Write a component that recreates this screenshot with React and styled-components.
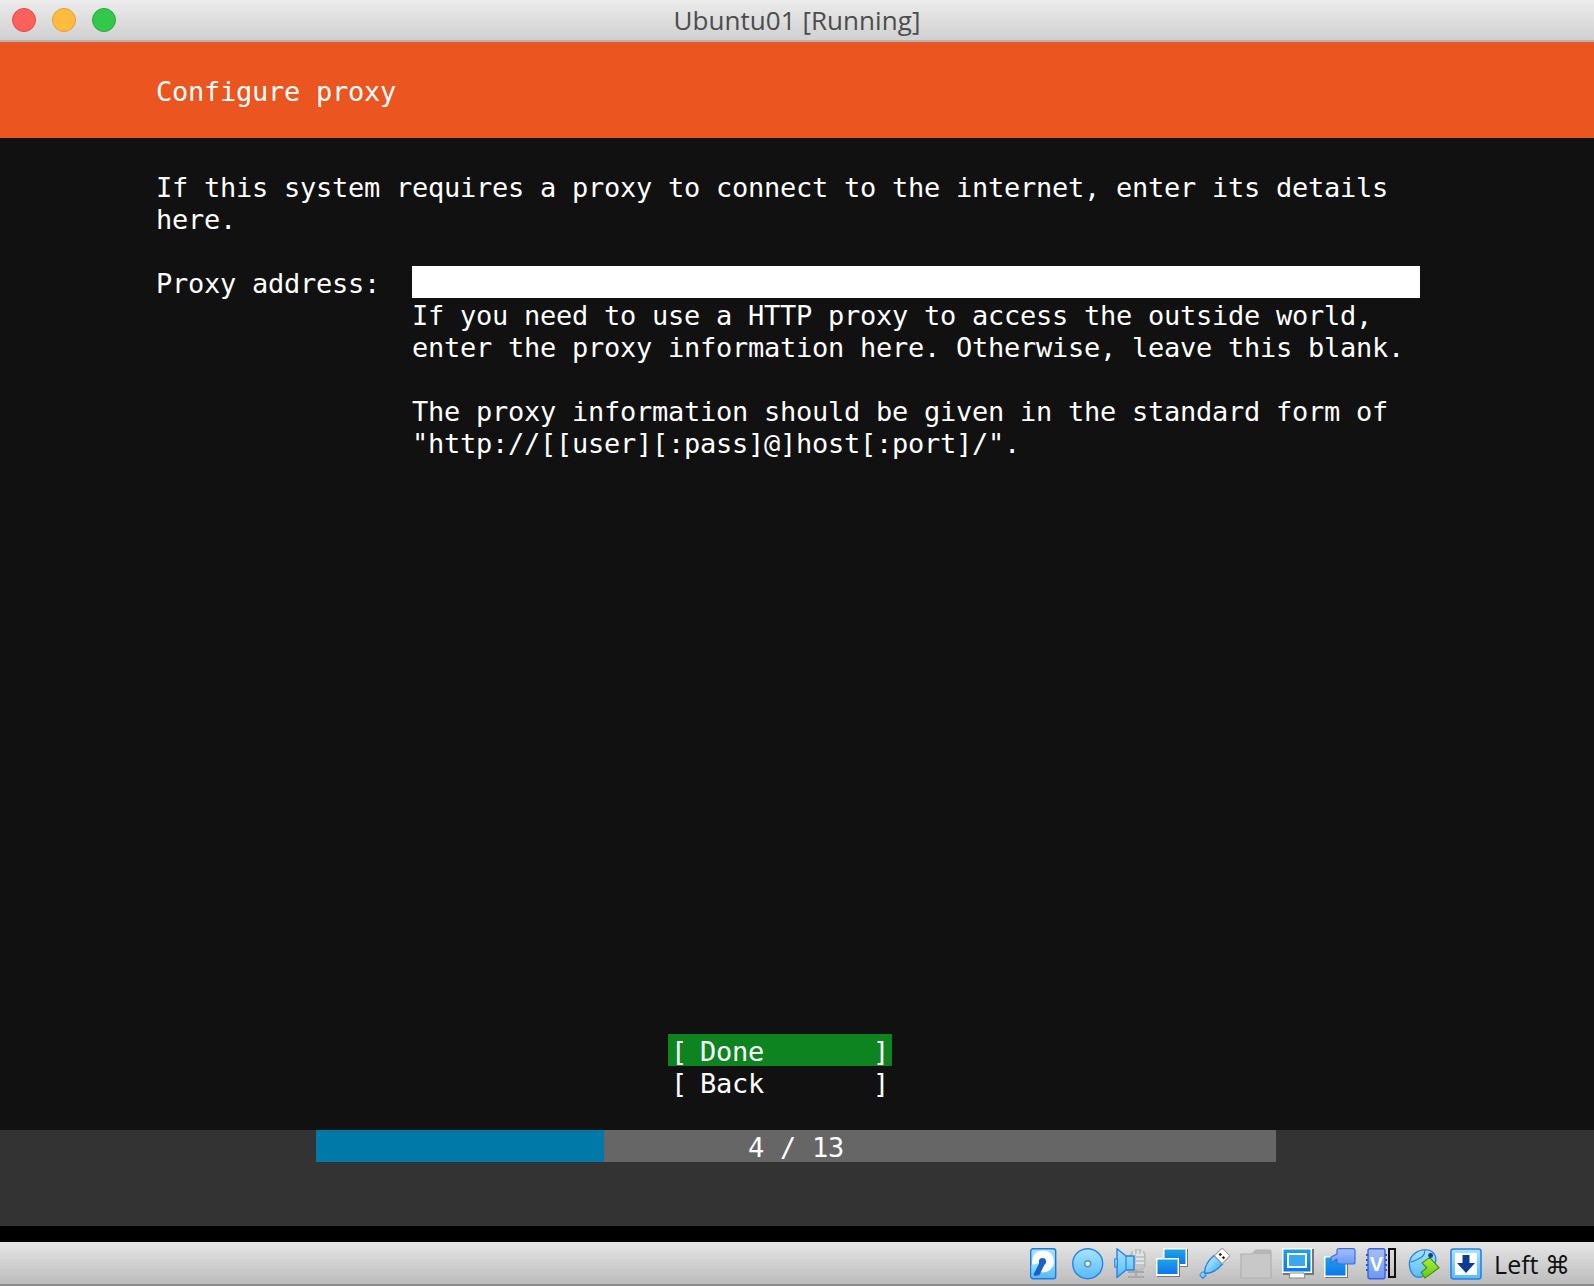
import React from 'react';
import styled, { createGlobalStyle } from 'styled-components';

const GlobalStyle = createGlobalStyle`
	html, body {
		margin: 0;
		padding: 0;
		background: #fff;
	}
	* {
		box-sizing: border-box;
	}
`;

const CELL = 16;
const BAR_CELLS = 60;

const Window = styled.div`
	width: 1594px;
	height: 1286px;
	display: flex;
	flex-direction: column;
	overflow: hidden;
`;

const TitleBar = styled.div`
	height: 42px;
	flex: none;
	display: grid;
	grid-template-columns: 1fr auto 1fr;
	align-items: center;
	padding-bottom: 2px;
	background: linear-gradient(#ececec, #d0d0d0);
	border-bottom: 2px solid #b4b4b4;
`;
const Lights = styled.div`
	display: flex;
	gap: 16px;
	margin-left: 12px;
`;
const Light = styled.span`
	width: 24px;
	height: 24px;
	border-radius: 50%;
	background: ${p => p.$fill};
	border: 1px solid ${p => p.$edge};
`;
const WindowTitle = styled.div`
	font-family: "Open Sans", sans-serif;
	font-size: 26px;
	letter-spacing: 0.05px;
	line-height: 40px;
	color: #4c4c4c;
`;

const Console = styled.div`
	font-family: "DejaVu Sans Mono", monospace;
	font-size: 27px;
	letter-spacing: -0.254px;
	color: #fff;
	flex: 1;
	display: flex;
	flex-direction: column;
	min-height: 0;
`;
const Row = styled.div`
	height: 32px;
	line-height: 36px;
	white-space: pre;
`;
const Header = styled.div`
	height: 96px;
	flex: none;
	padding: 32px 0 0 156px;
	background: #ea5520;
`;
const Screen = styled.div`
	flex: 1;
	display: flex;
	flex-direction: column;
	justify-content: space-between;
	padding: 32px 0 32px 156px;
	background: #111;
`;
const Intro = styled.div`
	margin-bottom: 32px;
`;
const Form = styled.div`
	display: grid;
	grid-template-columns: 256px 1008px;
`;
const Field = styled.div`
	height: 32px;
	background: #fff;
`;
const Buttons = styled.div`
	margin-left: 512px;
	width: 224px;
`;
const Button = styled(Row)`
	display: flex;
	background: ${p => (p.$focused ? '#0e8420' : 'transparent')};
`;
const Bracket = styled.span`
	width: ${p => (p.$end ? '16px' : '32px')};
	padding-left: ${p => (p.$end ? '0' : '3px')};
	margin-right: ${p => (p.$end ? '3px' : '0')};
`;
const Caption = styled.span`
	flex: 1;
`;

const Footer = styled.div`
	height: 96px;
	flex: none;
	padding-left: 316px;
	background: #333;
`;
const Progress = styled.div`
	width: 960px;
	display: grid;
	background: #666;
`;
const ProgressFill = styled.div`
	grid-area: 1 / 1;
	background: #0079a9;
`;
const ProgressLabel = styled(Row)`
	grid-area: 1 / 1;
	text-align: center;
`;
const Gap = styled.div`
	height: 16px;
	flex: none;
	background: #000;
`;

const StatusBar = styled.div`
	height: 44px;
	flex: none;
	display: flex;
	justify-content: flex-end;
	align-items: center;
	gap: 10px;
	padding: 2px 24px 0 0;
	background: linear-gradient(#e6e6e6, #bcbcbc);
	border-bottom: 2px solid #8c8c8c;
`;
const Icon = styled.svg`
	width: 32px;
	height: 32px;
	flex: none;
`;
const HostKey = styled.div`
	font-family: "Open Sans", sans-serif;
	font-size: 25px;
	line-height: 32px;
	color: #111;
	margin-left: 2px;
	white-space: pre;
`;

const Defs = () => (
	<svg width="0" height="0" style={{ position: 'absolute' }}>
		<defs>
			<linearGradient id="sky" x1="0" y1="0" x2="0" y2="1">
				<stop offset="0" stopColor="#a8e4ff" />
				<stop offset="1" stopColor="#55bcf8" />
			</linearGradient>
			<linearGradient id="deep" x1="0" y1="0" x2="0" y2="1">
				<stop offset="0" stopColor="#1ea2e4" />
				<stop offset="1" stopColor="#0a78ee" />
			</linearGradient>
			<linearGradient id="lilac" x1="0" y1="0" x2="0" y2="1">
				<stop offset="0" stopColor="#a4c0fc" />
				<stop offset="1" stopColor="#6a98f6" />
			</linearGradient>
			<linearGradient id="lime" x1="0" y1="0" x2="0" y2="1">
				<stop offset="0" stopColor="#b4ee3c" />
				<stop offset="1" stopColor="#62c818" />
			</linearGradient>
		</defs>
	</svg>
);

const HardDisk = () => (
	<Icon viewBox="0 0 32 32">
		<rect x="0.7" y="0.7" width="25" height="30" rx="2.5" fill="url(#sky)" stroke="#1c78e6" strokeWidth="1.4" />
		<circle cx="13" cy="13.5" r="11" fill="#fff" />
		<path d="M12 14 L1.5 17 L1.5 29 L9 29 Z" fill="url(#sky)" />
		<circle cx="12.5" cy="13.5" r="3.6" fill="#1a62c8" />
		<path d="M10 13.5 L15 15.5 L9.5 27 L4.5 28 Q3 26 4.5 24.5 Z" fill="#1a62c8" />
	</Icon>
);

const Disc = () => (
	<Icon viewBox="0 0 32 32">
		<circle cx="15.7" cy="15.7" r="15" fill="url(#sky)" stroke="#2a80e6" strokeWidth="1.4" />
		<circle cx="15.7" cy="15.7" r="3" fill="#d4effd" stroke="#6a8aa4" strokeWidth="1.4" />
	</Icon>
);

const Audio = () => (
	<Icon viewBox="0 0 32 32">
		<rect x="17" y="2" width="14" height="20" rx="5" fill="#c4c4c4" stroke="#b0b0b0" />
		<path d="M22 7h8M22 11h8M22 15h8M20 2v6M24 2v4M28 2v4" stroke="#eee" strokeWidth="1.4" />
		<path d="M14 24h16M22 22v6M14 29h16" stroke="#a8a8a8" strokeWidth="2.2" fill="none" />
		<path d="M3 0.8 L12 8 H20 V22 H12 L3 29.5 Z" fill="url(#sky)" stroke="#2a80e6" strokeWidth="1.4" strokeLinejoin="round" />
		<rect x="0.7" y="11" width="2.6" height="8" fill="url(#sky)" stroke="#2a80e6" />
		<path d="M12 8 V22" stroke="#2a80e6" strokeWidth="1.2" />
	</Icon>
);

const Monitor = ({ x, y, w, h }) => (
	<g>
		<rect x={x + 1} y={y + 1} width={w} height={h} fill="#777" />
		<rect x={x} y={y} width={w} height={h} fill="#fff" />
		<rect x={x + 1.5} y={y + 1.5} width={w - 3} height={h - 3.5} fill="url(#deep)" />
	</g>
);

const Network = () => (
	<Icon viewBox="0 0 32 32">
		<Monitor x={7} y={0} w={24} h={18} />
		<Monitor x={0} y={10} w={23} h={18} />
	</Icon>
);

const Usb = () => (
	<Icon viewBox="0 0 32 32">
		<g transform="rotate(-45 16 16)">
			<rect x="-2" y="13.5" width="5" height="5" rx="1" fill="url(#sky)" stroke="#2a80e6" />
			<path d="M3 16 Q9 9 22 10 V22 Q9 23 3 16 Z" fill="url(#sky)" stroke="#2a80e6" strokeWidth="1.4" />
			<rect x="22" y="10.5" width="11" height="11" fill="#fff" stroke="#9a9a9a" />
			<rect x="26" y="12.5" width="2.4" height="2.4" fill="#222" />
			<rect x="26" y="17" width="2.4" height="2.4" fill="#222" />
		</g>
	</Icon>
);

const Folder = () => (
	<Icon viewBox="0 0 32 32">
		<path d="M1 6 L12 6 L16 2 H30 Q31 2 31 4 V30 H1 Z" fill="#c8c8c8" stroke="#b0b0b0" strokeWidth="1.2" />
		<path d="M16 2 H30 Q31 2 31 4 V6 H12 Z" fill="#b6b6b6" />
	</Icon>
);

const Display = () => (
	<Icon viewBox="0 0 32 32">
		<rect x="1" y="1" width="31" height="26" fill="#777" />
		<rect x="0" y="0" width="30" height="25" fill="#fff" />
		<rect x="1.5" y="1.5" width="27" height="22" fill="url(#deep)" />
		<rect x="6" y="6" width="18" height="13" fill="#3aa8f0" stroke="#fff" strokeWidth="2" />
		<path d="M8 25 H22 L23 30 H7 Z" fill="#fff" stroke="#888" />
	</Icon>
);

const Capture = () => (
	<Icon viewBox="0 0 32 32">
		<rect x="1" y="9" width="23" height="21" fill="#777" />
		<rect x="0" y="8" width="23" height="21" fill="#fff" />
		<rect x="1.5" y="9.5" width="20" height="18" fill="url(#deep)" />
		<path d="M7 9 L13 6 V2 Q13 0.7 15 0.7 H29 Q31 0.7 31 3 V14 Q31 16 29 16 H15 Q13 16 13 14 V11 L7 15 Z" fill="url(#lilac)" stroke="#3d6ee0" strokeWidth="1.2" strokeLinejoin="round" />
	</Icon>
);

const ChipText = styled.text`
	font-family: "Liberation Sans", sans-serif;
	font-size: 20px;
	font-weight: 700;
	fill: #fff;
`;

const Chip = () => (
	<Icon viewBox="0 0 32 32">
		<path d="M0 7h3M0 12h3M0 17h3M0 22h3M18 7h3M18 12h3M18 17h3M18 22h3" stroke="#2c50c8" strokeWidth="2" />
		<rect x="2" y="0.7" width="17" height="30" rx="2" fill="url(#lilac)" stroke="#3d62d8" strokeWidth="1.4" />
		<ChipText x="10.5" y="23" textAnchor="middle">V</ChipText>
		<rect x="23" y="1" width="6" height="28" fill="none" stroke="#111" strokeWidth="2" />
	</Icon>
);

const Mouse = () => (
	<Icon viewBox="0 0 34 32">
		<path d="M2 20 C-1 8 10 0 20 1 C28 2 32 9 28 17 C24 26 16 31 10 30 C6 30 3 25 2 20 Z" fill="url(#sky)" stroke="#2a80e6" strokeWidth="1.4" />
		<path d="M18 1 C18 6 17 9 3 14" stroke="#2a80e6" strokeWidth="1.2" fill="none" />
		<path d="M23 9 L33 20 L18 31 L14 25 L20 20 L15 15 Z" fill="url(#lime)" stroke="#3c9410" strokeWidth="1.2" strokeLinejoin="round" />
		<circle cx="24" cy="7" r="2.6" fill="#183c8c" />
	</Icon>
);

const Download = () => (
	<Icon viewBox="0 0 32 32">
		<rect x="1" y="1" width="30" height="30" rx="2.5" fill="url(#sky)" stroke="#2a80e6" strokeWidth="1.6" />
		<rect x="5" y="5" width="22" height="22" fill="#fff" />
		<path d="M12.5 7 H19.5 V15 H25 L16 25 L7 15 H12.5 Z" fill="#0c3c94" />
	</Icon>
);

const MenuButton = ({ focused, children }) => (
	<Button $focused={focused}>
		<Bracket>[</Bracket>
		<Caption>{children}</Caption>
		<Bracket $end>]</Bracket>
	</Button>
);

function App() {
	const step = 4;
	const total = 13;
	const fill = Math.floor((BAR_CELLS * step) / total) * CELL;

	return (
		<Window>
			<GlobalStyle />
			<Defs />
			<TitleBar>
				<Lights>
					<Light $fill="#fc605c" $edge="#df4a46" />
					<Light $fill="#fdbc40" $edge="#dfa030" />
					<Light $fill="#34c84a" $edge="#28a83c" />
				</Lights>
				<WindowTitle>Ubuntu01 [Running]</WindowTitle>
			</TitleBar>
			<Console>
				<Header>
					<Row>Configure proxy</Row>
				</Header>
				<Screen>
					<div>
						<Intro>
							<Row>If this system requires a proxy to connect to the internet, enter its details</Row>
							<Row>here.</Row>
						</Intro>
						<Form>
							<Row>Proxy address:</Row>
							<div>
								<Field />
								<Row>If you need to use a HTTP proxy to access the outside world,</Row>
								<Row>enter the proxy information here. Otherwise, leave this blank.</Row>
								<Row />
								<Row>The proxy information should be given in the standard form of</Row>
								<Row>"http://[[user][:pass]@]host[:port]/".</Row>
							</div>
						</Form>
					</div>
					<Buttons>
						<MenuButton focused>Done</MenuButton>
						<MenuButton>Back</MenuButton>
					</Buttons>
				</Screen>
				<Footer>
					<Progress>
						<ProgressFill style={{ width: fill }} />
						<ProgressLabel>{`${step} / ${total}`}</ProgressLabel>
					</Progress>
				</Footer>
			</Console>
			<Gap />
			<StatusBar>
				<HardDisk />
				<Disc />
				<Audio />
				<Network />
				<Usb />
				<Folder />
				<Display />
				<Capture />
				<Chip />
				<Mouse />
				<Download />
				<HostKey>Left ⌘</HostKey>
			</StatusBar>
		</Window>
	);
}

export default App;
